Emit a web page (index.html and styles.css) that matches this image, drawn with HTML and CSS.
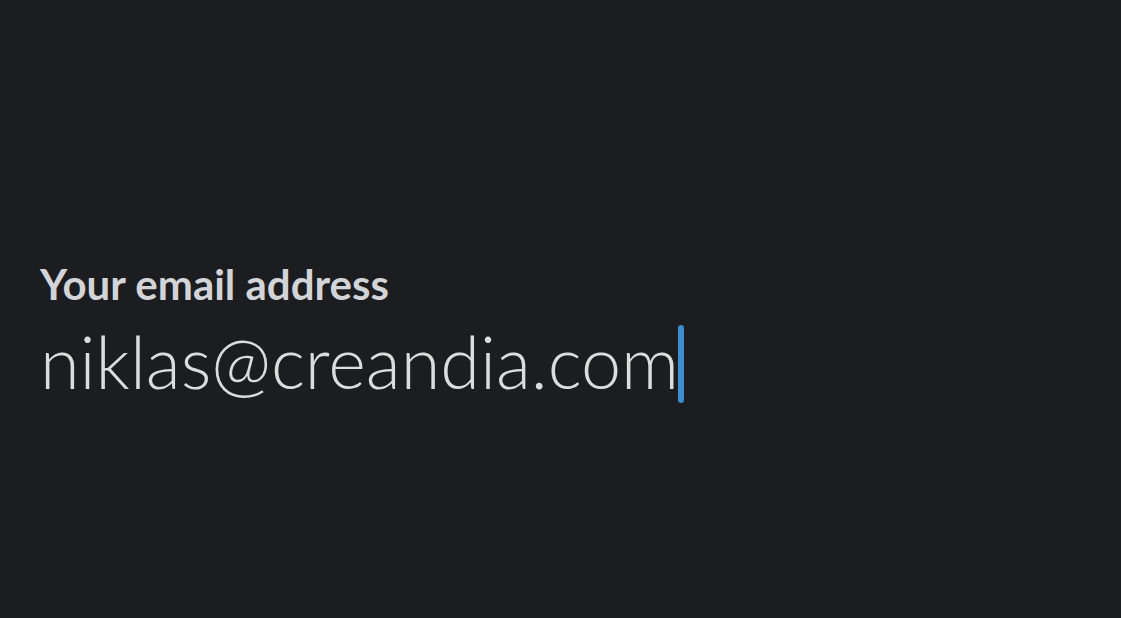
FILE: index.html
```html
<!DOCTYPE html>
<html>
<head>
<meta charset="utf-8">
<link rel="stylesheet" href="styles.css">
</head>
<body>
<main class="screen">
  <div class="field">
    <label class="field-label">Your email address</label>
    <div class="field-value"><span class="value-text">niklas@creandia.com</span><span class="caret"></span></div>
  </div>
</main>
</body>
</html>
```
FILE: styles.css
```css
html, body {
  margin: 0;
  padding: 0;
  background: #1c1d20;
}
.screen {
  width: 1121px;
  height: 618px;
  display: flex;
  flex-direction: column;
  justify-content: flex-start;
  padding: 259px 0 0 40px;
  box-sizing: border-box;
  font-family: Lato, "Noto Sans", sans-serif;
}
.field {
  display: flex;
  flex-direction: column;
}
.field-label {
  font-size: 42px;
  font-weight: 700;
  color: #d3d4d7;
  line-height: 50px;
}
.field-value {
  display: flex;
  align-items: center;
  height: 90px;
  margin-top: 7px;
}
.value-text {
  font-size: 72px;
  font-weight: 300;
  color: #dcdcdd;
  line-height: 90px;
}
.caret {
  width: 6px;
  height: 78px;
  border-radius: 3px;
  background: #3c8ecf;
  margin-left: -1px;
  margin-top: 6px;
}
```
